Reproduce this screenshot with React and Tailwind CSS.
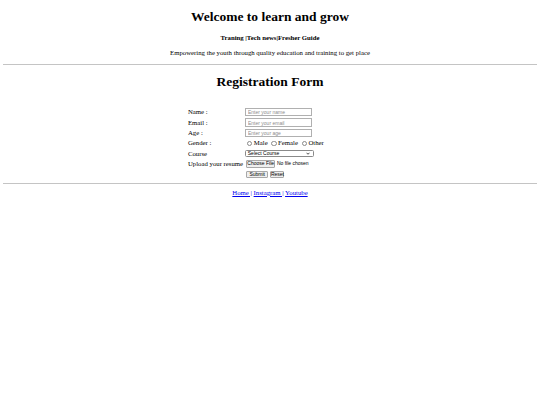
const FIELDS = [
  { label: 'Name :', placeholder: 'Enter your name' },
  { label: 'Email :', placeholder: 'Enter your email' },
  { label: 'Age :', placeholder: 'Enter your age' },
]

function Radio({ label }) {
  return (
    <label className="flex items-center">
      <span className="ml-[2.1px] mr-[1.3px] h-[5.4px] w-[5.4px] rounded-full border border-[#8a8a8a] bg-white" />
      <span className="mr-[1.7px]">{label}</span>
    </label>
  )
}

function Btn({ children, w }) {
  return (
    <span
      className={`flex h-[7.6px] items-center justify-center whitespace-nowrap rounded-[1px] border border-[#a8a8a8] bg-[#efefef] font-['Liberation_Sans',sans-serif] text-[5px] leading-none text-black ${w}`}
    >
      {children}
    </span>
  )
}

export default function App() {
  return (
    <div className="flex min-h-screen flex-col bg-white px-[3.4px] font-['Liberation_Serif',serif] text-black">
      {/* Header */}
      <h1 className="mt-[9px] text-center text-[13.5px] font-bold leading-[15.5px]">Welcome to learn and grow</h1>
      <h4 className="mt-[9px] text-center text-[6.75px] font-bold leading-[7.8px]">Traning |Tech news|Fresher Guide</h4>
      <p className="mt-[7.5px] text-center text-[6.75px] leading-[7.8px]">
        Empowering the youth through quality education and training to get place
      </p>
      <hr className="mt-[7px] h-px border-0 bg-[#c4c4c4]" />

      {/* Form */}
      <h2 className="mt-[9.5px] text-center text-[13.5px] font-bold leading-[15.5px]">Registration Form</h2>

      <form className="ml-[184.6px] mt-[17.5px] grid grid-cols-[57px_auto] auto-rows-[10.35px] items-center self-start text-[6.75px] leading-[7.8px]">
        {FIELDS.map(f => (
          <div key={f.label} className="contents">
            <span>{f.label}</span>
            <input
              placeholder={f.placeholder}
              className="h-[8.3px] w-[67px] border border-[#b0b0b0] px-[2px] font-['Liberation_Sans',sans-serif] text-[5px] leading-none outline-none placeholder:text-[#8c8c8c]"
            />
          </div>
        ))}

        <span>Gender :</span>
        <div className="flex items-center">
          <Radio label="Male" />
          <Radio label="Female" />
          <Radio label="Other" />
        </div>

        <span>Course</span>
        <div className="flex h-[7px] w-[69px] items-center justify-between rounded-[1.5px] border border-[#8a8a8a] pl-[1.8px] pr-[2.6px] font-['Liberation_Sans',sans-serif] text-[5px] leading-none">
          <span>Select Course</span>
          <svg width="4" height="3" viewBox="0 0 8 5" fill="none" stroke="#222" strokeWidth="1.6">
            <path d="M1 1l3 3 3-3" />
          </svg>
        </div>

        <span className="whitespace-nowrap">Upload your resume</span>
        <div className="flex items-center whitespace-nowrap">
          <span className="ml-[1.5px]"><Btn w="w-[28.4px]">Choose File</Btn></span>
          <span className="ml-[2px] font-['Liberation_Sans',sans-serif] text-[5px] leading-none">No file chosen</span>
        </div>

        <span />
        <div className="flex items-center gap-[2.6px] pl-[1.5px]">
          <Btn w="w-[21.4px]">Submit</Btn>
          <Btn w="w-[14px]">Reset</Btn>
        </div>
      </form>

      <hr className="mt-[3.4px] h-px border-0 bg-[#c4c4c4]" />

      {/* Footer */}
      <p className="mt-[5px] text-center text-[6.75px] leading-[7.8px]">
        <a href="#" className="text-[#0000ee] underline">Home |</a>{' '}
        <a href="#" className="text-[#0000ee] underline">Instagram |</a>{' '}
        <a href="#" className="text-[#0000ee] underline">Youtube</a>
      </p>
    </div>
  )
}
